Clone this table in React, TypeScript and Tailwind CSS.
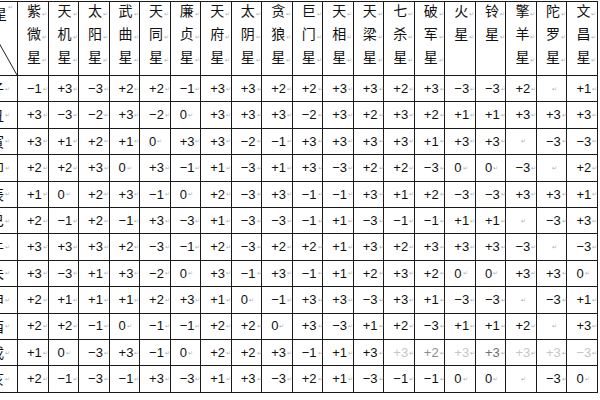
const stars: string[][] = [
  ["紫", "微", "星"],
  ["天", "机", "星"],
  ["太", "阳", "星"],
  ["武", "曲", "星"],
  ["天", "同", "星"],
  ["廉", "贞", "星"],
  ["天", "府", "星"],
  ["太", "阴", "星"],
  ["贪", "狼", "星"],
  ["巨", "门", "星"],
  ["天", "相", "星"],
  ["天", "梁", "星"],
  ["七", "杀", "星"],
  ["破", "军", "星"],
  ["火", "星"],
  ["铃", "星"],
  ["擎", "羊", "星"],
  ["陀", "罗", "星"],
  ["文", "昌", "星"],
];

const palaces = ["子", "丑", "寅", "卯", "辰", "巳", "午", "未", "申", "酉", "戌", "亥"];

// "" = empty cell (only the end mark shows)
const rows: string[][] = [
  ["-1", "+3", "-3", "+2", "+2", "-1", "+3", "+3", "+2", "+2", "+3", "+3", "+2", "+3", "-3", "-3", "+2", "", "+1"],
  ["+3", "-3", "-2", "+3", "-2", "0", "+3", "+3", "+3", "-2", "+3", "+2", "+3", "+2", "+1", "+1", "+3", "+3", "+3"],
  ["+3", "+1", "+2", "+1", "0", "+3", "+3", "-2", "-1", "+3", "+3", "+3", "+3", "+1", "+3", "+3", "", "-3", "-3"],
  ["+2", "+2", "+3", "0", "+3", "-1", "+1", "-3", "+1", "+3", "-3", "+2", "+2", "-3", "0", "0", "-3", "", "+2"],
  ["+1", "0", "+2", "+3", "-1", "0", "+2", "-3", "+3", "-1", "-1", "+3", "+1", "+2", "-3", "-3", "+3", "+3", "+1"],
  ["+2", "-1", "+2", "-1", "+3", "-3", "+1", "-3", "-3", "-1", "+1", "-3", "-1", "-1", "+1", "+1", "", "-3", "+3"],
  ["+3", "+3", "+3", "+2", "-3", "-1", "+2", "-3", "+2", "+2", "+1", "+3", "+2", "+3", "+3", "+3", "-3", "", "-3"],
  ["+3", "-3", "+1", "+3", "-2", "0", "+3", "-1", "+3", "-1", "+1", "+2", "+3", "+2", "0", "0", "+3", "+3", "0"],
  ["+2", "+1", "+1", "+1", "+2", "+3", "+1", "0", "-1", "+3", "+3", "-3", "+3", "+1", "-3", "-3", "", "-3", "+1"],
  ["+2", "+2", "-1", "0", "-1", "-1", "+2", "+2", "0", "+3", "-3", "+1", "+2", "-3", "+1", "+1", "+2", "", "+3"],
  ["+1", "0", "-3", "+3", "-1", "0", "+2", "+2", "+3", "-1", "+1", "+3", "+3", "+2", "+3", "+3", "+3", "+3", "-3"],
  ["+2", "-1", "-3", "-1", "+3", "-3", "+1", "+3", "-3", "+2", "+1", "-3", "-1", "-1", "0", "0", "", "-3", "0"],
];

// washed-out cells in the 戌 row of the scan
const tone: Record<string, string> = {
  "10-12": "text-[#c6c6c6]",
  "10-13": "text-[#8c8c8c]",
  "10-14": "text-[#c6c6c6]",
  "10-15": "text-[#6f6f6f]",
  "10-16": "text-[#c6c6c6]",
  "10-17": "text-[#c6c6c6]",
  "10-18": "text-[#c6c6c6]",
};

const Mark = () => <span className="ml-px text-[6px] leading-none text-[#b0b0b0]">↵</span>;

export default function App() {
  return (
    <div className="w-[600px] h-[400px] overflow-hidden bg-white font-['Liberation_Sans','Noto_Sans_CJK_SC',sans-serif] text-[#111]">
      <div className="mt-px -ml-[24px] w-[622px] bg-[#1a1a1a] pt-px pr-px pb-px">
        <div className="grid grid-cols-[41px_repeat(19,minmax(0,1fr))] grid-rows-[73px_repeat(12,25.4px)] gap-px">
          {/* corner cell */}
          <div className="relative bg-white">
            <svg className="absolute inset-0 w-full h-full" viewBox="0 0 41 73" preserveAspectRatio="none">
              <line x1="0" y1="0" x2="41" y2="73" stroke="#222" strokeWidth="1" />
            </svg>
            <div className="flex justify-end pr-[4px] pt-[2px] font-['Noto_Sans_CJK_SC',sans-serif] text-[14px] leading-[18px]">
              星<Mark />
            </div>
            <div className="absolute bottom-[2px] left-[3px] font-['Noto_Sans_CJK_SC',sans-serif] text-[14px] leading-[18px]">
              宫<Mark />
            </div>
          </div>

          {stars.map((s, i) => (
            <div key={i} className="bg-white pl-[9px] font-['Noto_Sans_CJK_SC',sans-serif] text-[14px] leading-[23px]">
              <div className="-mt-[3px]">
                {s.map((ch, j) => (
                  <div key={j} className="flex items-baseline">
                    {ch}
                    <Mark />
                  </div>
                ))}
              </div>
            </div>
          ))}

          {rows.map((r, ri) => (
            <>
              <div key={`p${ri}`} className="flex items-center justify-end bg-white pr-[7px] font-['Noto_Sans_CJK_SC',sans-serif] text-[14px]">
                {palaces[ri]}
                <Mark />
              </div>
              {r.map((v, ci) => (
                <div
                  key={`${ri}-${ci}`}
                  className={`flex items-center bg-white pl-[9px] text-[13px] ${tone[`${ri}-${ci}`] ?? ""} ${v === "" ? "pl-[14px]" : ""}`}
                >
                  {v.replace("-", "−")}
                  <Mark />
                </div>
              ))}
            </>
          ))}
        </div>
      </div>
    </div>
  );
}
